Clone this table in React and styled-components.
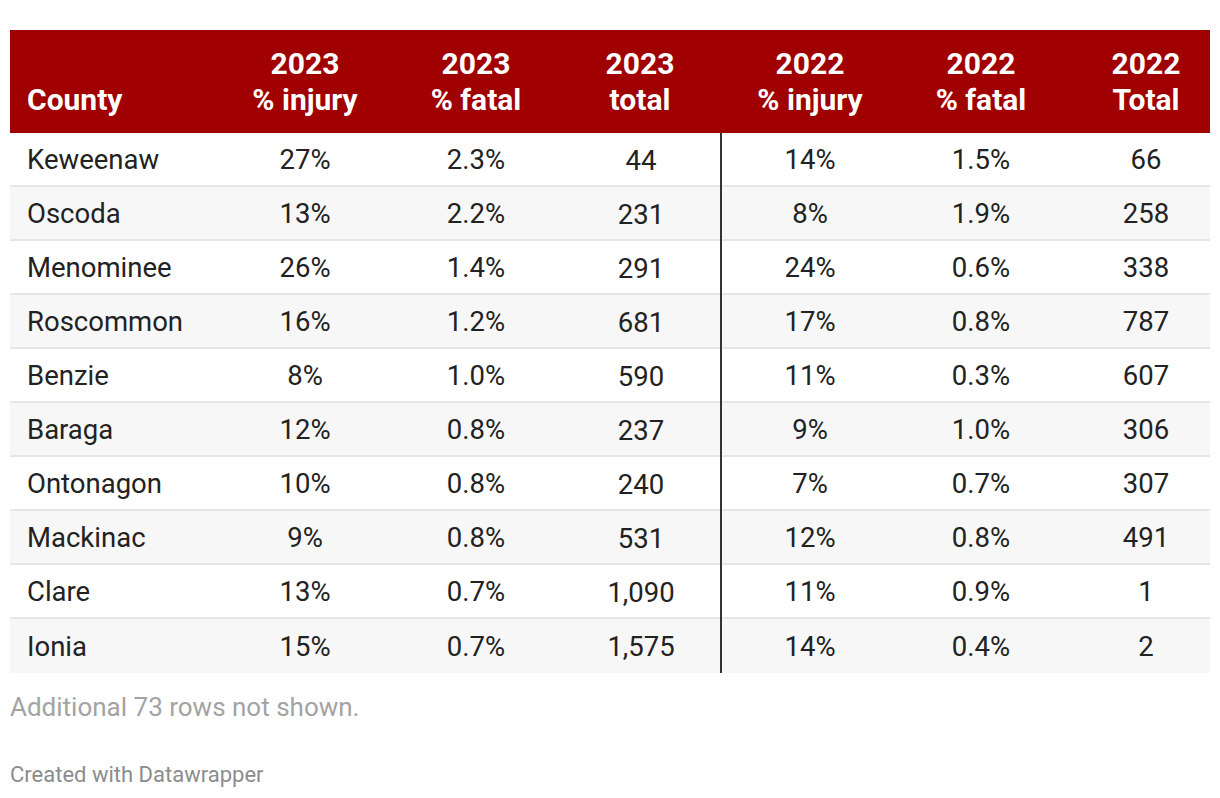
import React from 'react';
import styled, { createGlobalStyle } from 'styled-components';

const GlobalStyle = createGlobalStyle`
  body {
    margin: 0;
    background: #fff;
    font-family: Roboto, "Liberation Sans", sans-serif;
  }
`;

const rows = [
  ['Keweenaw', '27%', '2.3%', '44', '14%', '1.5%', '66'],
  ['Oscoda', '13%', '2.2%', '231', '8%', '1.9%', '258'],
  ['Menominee', '26%', '1.4%', '291', '24%', '0.6%', '338'],
  ['Roscommon', '16%', '1.2%', '681', '17%', '0.8%', '787'],
  ['Benzie', '8%', '1.0%', '590', '11%', '0.3%', '607'],
  ['Baraga', '12%', '0.8%', '237', '9%', '1.0%', '306'],
  ['Ontonagon', '10%', '0.8%', '240', '7%', '0.7%', '307'],
  ['Mackinac', '9%', '0.8%', '531', '12%', '0.8%', '491'],
  ['Clare', '13%', '0.7%', '1,090', '11%', '0.9%', '1'],
  ['Ionia', '15%', '0.7%', '1,575', '14%', '0.4%', '2'],
];

const headers = [
  ['County'],
  ['2023', '% injury'],
  ['2023', '% fatal'],
  ['2023', 'total'],
  ['2022', '% injury'],
  ['2022', '% fatal'],
  ['2022', 'Total'],
];

const cols = '208px 174px 168px 160px 180px 162px 148px';

const Wrap = styled.div`
  padding: 30px 10px 0;
`;

const HeadRow = styled.div`
  display: grid;
  grid-template-columns: ${cols};
  background: #a00000;
  height: 103px;
  box-sizing: border-box;
  padding: 16px 0 15px;
`;

const HeadCell = styled.div`
  display: flex;
  flex-direction: column;
  justify-content: flex-end;
  align-items: ${p => (p.$first ? 'flex-start' : 'center')};
  padding-left: ${p => (p.$first ? '17px' : p.$last ? '20px' : '0')};
  color: #fff;
  font-weight: 700;
  font-size: 30px;
  line-height: 36px;
  white-space: nowrap;
`;

const Row = styled.div`
  display: grid;
  grid-template-columns: ${cols};
  height: 54px;
  box-sizing: border-box;
  background: ${p => (p.$odd ? '#f7f7f7' : '#fff')};
  border-bottom: ${p => (p.$last ? 'none' : '2px solid #e6e6e6')};
`;

const Cell = styled.div`
  display: flex;
  align-items: center;
  justify-content: ${p => (p.$first ? 'flex-start' : 'center')};
  padding-left: ${p => (p.$first ? '17px' : p.$last ? '20px' : '0')};
  padding-top: 1px;
  font-size: 27.5px;
  color: #222;
  white-space: nowrap;
  border-right: ${p => (p.$divider ? '2px solid #333' : 'none')};
  margin-bottom: ${p => (p.$divider && !p.$lastRow ? '-2px' : '0')};
  position: relative;
  z-index: ${p => (p.$divider ? 1 : 0)};
  transform: ${p => (p.$divider ? 'translateX(2px)' : 'none')};
`;

const Note = styled.div`
  margin-top: 19px;
  font-size: 26px;
  line-height: 30px;
  color: #a3a3a3;
`;

const Credit = styled.div`
  margin-top: 40px;
  font-size: 22px;
  line-height: 26px;
  color: #8c8c8c;
`;

export default function App() {
  return (
    <Wrap>
      <GlobalStyle />
      <HeadRow>
        {headers.map((h, i) => (
          <HeadCell key={i} $first={i === 0} $last={i === 6}>
            {h.map(line => (
              <span key={line}>{line}</span>
            ))}
          </HeadCell>
        ))}
      </HeadRow>
      {rows.map((r, ri) => (
        <Row key={r[0]} $odd={ri % 2 === 1} $last={ri === rows.length - 1}>
          {r.map((v, ci) => (
            <Cell
              key={ci}
              $first={ci === 0}
              $last={ci === 6}
              $divider={ci === 3}
              $lastRow={ri === rows.length - 1}
            >
              {v}
            </Cell>
          ))}
        </Row>
      ))}
      <Note>Additional 73 rows not shown.</Note>
      <Credit>Created with Datawrapper</Credit>
    </Wrap>
  );
}
